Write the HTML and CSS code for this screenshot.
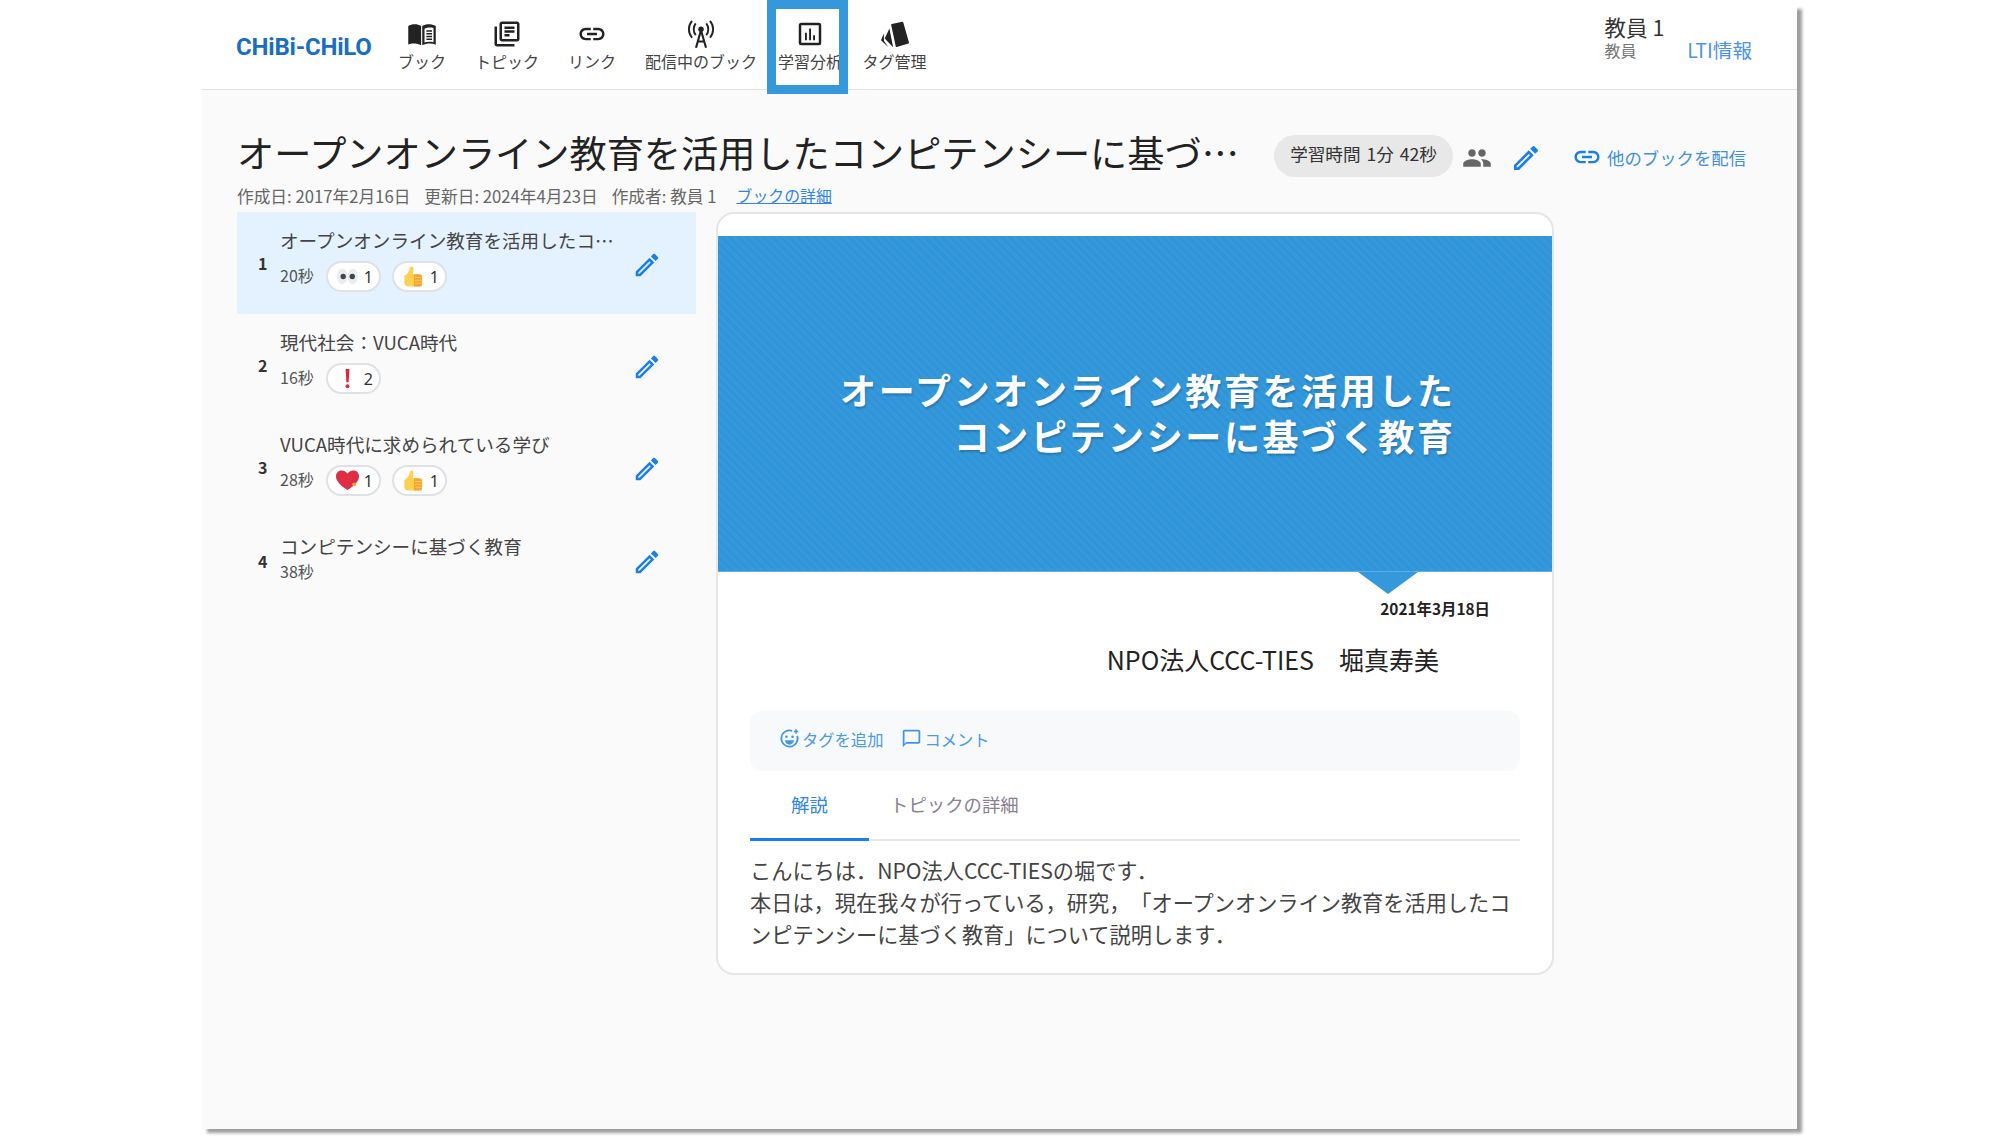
FILE: index.html
```html
<!DOCTYPE html>
<html lang="ja">
<head>
<meta charset="utf-8">
<title>CHiBi-CHiLO</title>
<link rel="stylesheet" href="styles.css">
</head>
<body>
<div class="page">
  <header class="header">
    <div class="logo">CHiBi-CHiLO</div>
    <nav class="nav">
      <a class="nav-item">
        <svg class="nav-icon" viewBox="0 0 24 24"><path d="M1 5.500C3.500 4 8 3.500 11.300 5.500V21C8 19.300 3.500 19.300 1 20.500Z" fill="#222"/><path d="M12.200 5.500C15.500 3.500 20 4 23 5.500V20.500C20 19.300 15.500 19.300 12.200 21Z" fill="#222"/><path d="M14 7.800C16 6.700 18.800 6.600 21.200 7.200V18.500C18.800 18 16 18 14 18.800Z" fill="#fff"/><path d="M15.500 9.600H20M15.500 11.800H20M15.500 14H20M15.500 16.200H20" stroke="#222" stroke-width="1.200"/></svg>
        <span>ブック</span>
      </a>
      <a class="nav-item">
        <svg class="nav-icon" viewBox="0 0 24 24"><path d="M4 6H2v14c0 1.100.9 2 2 2h14v-2H4V6zm16-4H8c-1.100 0-2 .9-2 2v12c0 1.100.9 2 2 2h12c1.100 0 2-.9 2-2V4c0-1.100-.9-2-2-2zm0 14H8V4h12v12zM10 9h8v2h-8zm0 3h4v2h-4zm0-6h8v2h-8z" fill="#222"/></svg>
        <span>トピック</span>
      </a>
      <a class="nav-item">
        <svg class="nav-icon" viewBox="0 0 24 24"><path d="M3.900 12c0-1.710 1.390-3.100 3.100-3.100h4V7H7c-2.760 0-5 2.240-5 5s2.240 5 5 5h4v-1.900H7c-1.710 0-3.100-1.390-3.100-3.100zM8 13h8v-2H8v2zm9-6h-4v1.900h4c1.710 0 3.100 1.390 3.100 3.100s-1.390 3.100-3.100 3.100h-4V17h4c2.760 0 5-2.240 5-5s-2.240-5-5-5z" fill="#222"/></svg>
        <span>リンク</span>
      </a>
      <a class="nav-item">
        <svg class="nav-icon" viewBox="0 0 24 24"><circle cx="12" cy="8.200" r="2.200" fill="#222"/><path d="M12 9L8 23M12 9L16 23M9.500 18H14.500" fill="none" stroke="#222" stroke-width="1.700"/><path d="M7.800 3.500C5.600 6.200 5.600 10.200 7.800 12.900M16.200 3.500C18.400 6.200 18.400 10.200 16.200 12.900M4.800 1.500C1.500 5.500 1.500 11 4.800 15M19.200 1.500C22.500 5.500 22.500 11 19.200 15" fill="none" stroke="#222" stroke-width="1.500"/></svg>
        <span>配信中のブック</span>
      </a>
      <a class="nav-item nav-current">
        <svg class="nav-icon" viewBox="0 0 24 24"><path d="M5 3h14a2 2 0 0 1 2 2v14a2 2 0 0 1-2 2H5a2 2 0 0 1-2-2V5a2 2 0 0 1 2-2zm0 2v14h14V5z" fill="#222" fill-rule="evenodd"/><path d="M8 11h1.500v6H8zM11.300 7.500h1.500V17h-1.500zM14.500 13H16v4h-1.500z" fill="#222"/></svg>
        <span>学習分析</span>
      </a>
      <a class="nav-item">
        <svg class="nav-icon" viewBox="0 0 24 24"><path d="M9.500 4.500L18 2.800L22.600 19L13.200 21.800Z" fill="#222" stroke="#222" stroke-width="1.200" stroke-linejoin="round"/><path d="M7.500 7.500L3.800 15.500L10.500 22.500Z" fill="#222"/><path d="M3 11.500L.8 17L6.800 22.500L3.200 17.500Z" fill="#222"/></svg>
        <span>タグ管理</span>
      </a>
    </nav>
    <div class="user">
      <div class="user-main">
        <div class="user-name">教員 1</div>
        <div class="user-role">教員</div>
      </div>
      <a class="user-lti">LTI情報</a>
    </div>
    <div class="highlight"></div>
  </header>

  <main class="main">
    <div class="title-row">
      <h1 class="title">オープンオンライン教育を活用したコンピテンシーに基づく教育</h1>
      <div class="chip-time">学習時間 1分 42秒</div>
      <svg class="icon-people" viewBox="0 0 24 24"><path d="M16 11c1.660 0 2.990-1.340 2.990-3S17.660 5 16 5c-1.660 0-3 1.340-3 3s1.340 3 3 3zm-8 0c1.660 0 2.990-1.340 2.990-3S9.660 5 8 5C6.340 5 5 6.340 5 8s1.340 3 3 3zm0 2c-2.330 0-7 1.170-7 3.500V19h14v-2.500c0-2.330-4.670-3.500-7-3.500zm8 0c-.29 0-.62.02-.97.05 1.160.84 1.970 1.970 1.970 3.450V19h6v-2.500c0-2.330-4.670-3.500-7-3.500z" fill="#666"/></svg>
      <svg class="icon-edit-lg" viewBox="0 0 24 24"><use href="#pencil"/></svg>
      <a class="share-link">
        <svg class="icon-link" viewBox="0 0 24 24"><path d="M3.900 12c0-1.710 1.390-3.100 3.100-3.100h4V7H7c-2.760 0-5 2.240-5 5s2.240 5 5 5h4v-1.900H7c-1.710 0-3.100-1.390-3.100-3.100zM8 13h8v-2H8v2zm9-6h-4v1.900h4c1.710 0 3.100 1.390 3.100 3.100s-1.390 3.100-3.100 3.100h-4V17h4c2.760 0 5-2.240 5-5s-2.240-5-5-5z" fill="#1a7fe8"/></svg>
        <span>他のブックを配信</span>
      </a>
    </div>
    <div class="meta">
      <span>作成日: 2017年2月16日</span>
      <span>更新日: 2024年4月23日</span>
      <span>作成者: 教員 1</span>
      <a class="meta-link">ブックの詳細</a>
    </div>

    <div class="content">
      <ol class="topics">
        <li class="topic topic-active">
          <span class="topic-num">1</span>
          <div class="topic-body">
            <div class="topic-title">オープンオンライン教育を活用したコンピテンシーに基づく教育</div>
            <div class="topic-info">
              <span class="topic-time">20秒</span>
              <span class="pill"><svg class="emoji" viewBox="0 0 24 24"><use href="#eyes"/></svg><b>1</b></span>
              <span class="pill"><svg class="emoji" viewBox="0 0 24 24"><use href="#thumb"/></svg><b>1</b></span>
            </div>
          </div>
          <svg class="icon-edit" viewBox="0 0 24 24"><use href="#pencil"/></svg>
        </li>
        <li class="topic">
          <span class="topic-num">2</span>
          <div class="topic-body">
            <div class="topic-title">現代社会：VUCA時代</div>
            <div class="topic-info">
              <span class="topic-time">16秒</span>
              <span class="pill"><svg class="emoji" viewBox="0 0 24 24"><use href="#exclaim"/></svg><b>2</b></span>
            </div>
          </div>
          <svg class="icon-edit" viewBox="0 0 24 24"><use href="#pencil"/></svg>
        </li>
        <li class="topic">
          <span class="topic-num">3</span>
          <div class="topic-body">
            <div class="topic-title">VUCA時代に求められている学び</div>
            <div class="topic-info">
              <span class="topic-time">28秒</span>
              <span class="pill"><svg class="emoji" viewBox="0 0 24 24"><use href="#heart"/></svg><b>1</b></span>
              <span class="pill"><svg class="emoji" viewBox="0 0 24 24"><use href="#thumb"/></svg><b>1</b></span>
            </div>
          </div>
          <svg class="icon-edit" viewBox="0 0 24 24"><use href="#pencil"/></svg>
        </li>
        <li class="topic topic-plain">
          <span class="topic-num">4</span>
          <div class="topic-body">
            <div class="topic-title">コンピテンシーに基づく教育</div>
            <div class="topic-info">
              <span class="topic-time">38秒</span>
            </div>
          </div>
          <svg class="icon-edit" viewBox="0 0 24 24"><use href="#pencil"/></svg>
        </li>
      </ol>

      <section class="card">
        <div class="slide">
          <div class="slide-blue">
            <div class="slide-title">オープンオンライン教育を活用した<br>コンピテンシーに基づく教育</div>
          </div>
          <div class="slide-arrow"></div>
          <div class="slide-date">2021年3月18日</div>
          <div class="slide-author">NPO法人CCC-TIES　堀真寿美</div>
        </div>
        <div class="card-body">
          <div class="toolbar">
            <a class="tool">
              <svg class="tool-icon" viewBox="0 0 24 24"><path d="M15 3.200A9.300 9.300 0 1 0 20.800 9" fill="none" stroke="#3f97ea" stroke-width="2"/><circle cx="8.500" cy="10" r="1.500" fill="#3f97ea"/><circle cx="15.500" cy="10" r="1.500" fill="#3f97ea"/><path d="M7 14h10a5 5 0 0 1-10 0z" fill="#3f97ea"/><path d="M19.500 1.500v5M17 4h5" stroke="#3f97ea" stroke-width="1.800"/></svg>
              <span>タグを追加</span>
            </a>
            <a class="tool">
              <svg class="tool-icon" viewBox="0 0 24 24"><path d="M20 2H4c-1.100 0-2 .9-2 2v18l4-4h14c1.100 0 2-.9 2-2V4c0-1.100-.9-2-2-2zm0 14H6l-2 2V4h16v12z" fill="#3f97ea"/></svg>
              <span>コメント</span>
            </a>
          </div>
          <div class="tabs">
            <a class="tab tab-active">解説</a>
            <a class="tab">トピックの詳細</a>
          </div>
          <p class="desc">こんにちは．NPO法人CCC-TIESの堀です．<br>本日は，現在我々が行っている，研究，「オープンオンライン教育を活用したコンピテンシーに基づく教育」について説明します．</p>
        </div>
      </section>
    </div>
  </main>
</div>

<svg class="defs" width="0" height="0" aria-hidden="true">
  <defs>
    <g id="pencil"><path d="M14.060 9.020l.92.92L5.920 19H5v-.92l9.060-9.060M17.660 3c-.25 0-.51.100-.7.290l-1.830 1.830 3.750 3.750 1.830-1.830c.39-.39.39-1.020 0-1.410l-2.340-2.340c-.2-.2-.45-.29-.71-.29zm-3.600 3.190L3 17.250V21h3.750L17.810 9.940l-3.750-3.750z" fill="#1a7fe8"/></g>
    <g id="eyes"><ellipse cx="6.500" cy="12" rx="5.500" ry="8" fill="#e9edf1"/><ellipse cx="17.500" cy="12" rx="5.500" ry="8" fill="#e9edf1"/><circle cx="7.500" cy="12" r="2.800" fill="#444"/><circle cx="17" cy="12" r="2.800" fill="#444"/></g>
    <g id="thumb"><path d="M2.500 11.500C5 10 7.500 7 8.500 2.500c.3-1.500 3.500-1 3.500 1.500 0 2-.5 4-1 5.500h7v13H7c-3 0-4.500-1.500-4.500-4z" fill="#fdd04f"/><path d="M12.500 10h7.500c1.500 0 1.500 12.500 0 12.500h-7.500z" fill="#f4a43a"/><path d="M13.500 13h7M13.500 16h7M13.500 19h7" stroke="#fdd04f" stroke-width="1"/></g>
    <g id="exclaim"><path d="M10 2h4l-.8 14h-2.400z" fill="#d8283c"/><circle cx="12" cy="20" r="2" fill="#d8283c"/></g>
    <g id="heart"><path d="M12 22C4 16.500 0 12.500 0 7.500 0 3.500 3 1.500 6 1.500c2.800 0 4.800 1.500 6 3.500 1.200-2 3.200-3.500 6-3.500 3 0 6 2 6 6 0 5-4 9-12 14.500z" fill="#dd2e44"/><circle cx="19" cy="16" r="2" fill="#f4a43a"/></g>
  </defs>
</svg>
</body>
</html>
```

FILE: styles.css
```css
* { box-sizing: border-box; }
html, body { margin: 0; height: 100%; overflow: hidden; background: #fff; }
body {
  font-family: "Noto Sans CJK JP", "Noto Sans", sans-serif;
  color: #333;
  padding: 5px 0 0 202px;
  text-spacing-trim: space-all;
}
a { color: inherit; text-decoration: none; }

.page {
  width: 1595px;
  height: 1124px;
  background: #fafafa;
  box-shadow: 5px 4px 3px rgba(0, 0, 0, .38);
  display: flex;
  flex-direction: column;
}

.header {
  position: relative;
  flex: none;
  height: 85px;
  background: #fff;
  border-bottom: 1px solid #e2e2e2;
  display: flex;
  align-items: flex-start;
  padding-left: 34px;
}
.logo {
  margin-top: 26px;
  width: 142px;
  font-family: Roboto, sans-serif;
  font-weight: 700;
  font-size: 24px;
  line-height: 32px;
  letter-spacing: -.2px;
  color: #1a6ec2;
  white-space: nowrap;
}
.nav { display: flex; gap: 29px; margin-left: 20px; margin-top: 14px; }
.nav-item { display: flex; flex-direction: column; align-items: center; font-size: 16px; line-height: 20px; color: #444; }
.nav-item span { white-space: nowrap; }
.nav-icon { width: 30px; height: 30px; margin-bottom: 2px; }
.nav-current { margin-left: -8px; margin-right: -8.500px; }
.highlight {
  position: absolute;
  left: 565px;
  top: -5px;
  width: 81px;
  height: 94px;
  border: 9px solid #3498db;
}
.user { margin-left: auto; margin-right: 45px; margin-top: 10px; display: flex; align-items: flex-end; gap: 23px; }
.user-name { font-size: 21.500px; line-height: 24px; color: #333; white-space: nowrap; }
.user-role { font-size: 16px; line-height: 22px; color: #777; }
.user-lti { font-size: 19.600px; line-height: 22px; color: #4b93e8; white-space: nowrap; }

.main { flex: 1; padding: 41px 35px 0; min-height: 0; }

.title-row { display: flex; align-items: center; height: 50px; }
.title {
  margin: 0 0 8px;
  width: 1005px;
  font-size: 37.200px;
  font-weight: 400;
  line-height: 50px;
  color: #222;
  white-space: nowrap;
  overflow: hidden;
  text-overflow: ellipsis;
}
.chip-time {
  margin-left: 32px;
  width: 179px;
  height: 42px;
  border-radius: 21px;
  background: #e8e8e8;
  font-size: 17.600px;
  line-height: 38px;
  word-spacing: 2px;
  text-align: center;
  color: #333;
  white-space: nowrap;
}
.icon-people { width: 30px; height: 30px; margin-left: 9px; margin-top: 3px; }
.icon-edit-lg { width: 32px; height: 32px; margin-left: 18px; margin-top: 3px; }
.share-link { display: flex; align-items: center; gap: 5px; margin-left: 30px; margin-top: 2px; font-size: 17.400px; color: #3f8fe6; white-space: nowrap; }
.icon-link { width: 30px; height: 30px; }

.meta { display: flex; gap: 14px; height: 26px; margin-top: 2px; font-size: 16.700px; line-height: 26px; color: #666; white-space: nowrap; }
.meta-link { margin-left: 6px; color: #2f85ea; text-decoration: underline; font-size: 15.900px; }

.content { display: flex; align-items: flex-start; gap: 20px; margin-top: 3px; }

.topics { list-style: none; margin: 0; padding: 0; width: 459px; flex: none; }
.topic { display: flex; align-items: center; height: 102px; padding: 0 0 0 21px; }
.topic-active { background: #e4f2ff; }
.topic-plain { height: 85px; }
.topic-num { width: 22px; flex: none; font-size: 16px; font-weight: 700; color: #333; text-align: left; }
.topic-body { width: 339px; flex: none; margin-bottom: 8px; }
.topic-title { font-size: 18.600px; line-height: 27px; color: #444; white-space: nowrap; overflow: hidden; text-overflow: ellipsis; }
.topic-info { display: flex; align-items: center; gap: 10px; margin-top: 8px; font-size: 16px; color: #555; }
.topic-plain .topic-body { margin-bottom: 3px; }
.topic-plain .topic-info { margin-top: 0; }
.topic-time { width: 36px; line-height: 24px; margin-bottom: 3px; }
.pill {
  display: inline-flex;
  align-items: center;
  justify-content: space-between;
  width: 55px;
  height: 31px;
  padding: 0 6px 0 8px;
  border: 2px solid #dfe1e4;
  border-radius: 16px;
  background: #fff;
  margin-right: 1px;
}
.pill b { font-weight: 400; font-size: 16px; color: #333; font-family: "Noto Sans", sans-serif; }
.emoji { width: 23px; height: 23px; }
.icon-edit { width: 30px; height: 30px; margin-left: 13px; margin-top: 3px; }

.card {
  flex: none;
  width: 838px;
  height: 763px;
  background: #fff;
  border: 2px solid #e6e6e6;
  border-radius: 18px;
  overflow: hidden;
  padding-top: 22px;
}
.slide { position: relative; height: 475px; }
.slide-blue {
  height: 336px;
  padding: 129.500px 100px 0 0;
  background: repeating-linear-gradient(45deg, #3498db 0 3px, #3094d8 3px 6px);
  border-bottom: 1px solid #5cb0e8;
}
.slide-title {
  text-align: right;
  font-size: 36px;
  font-weight: 700;
  line-height: 46px;
  letter-spacing: 2.600px;
  margin-right: -3.500px;
  color: #fff;
  text-shadow: 1px 2px 2px rgba(0, 0, 0, .2);
}
.slide-arrow {
  position: absolute;
  left: 640px;
  top: 336px;
  width: 0;
  height: 0;
  border-left: 30px solid transparent;
  border-right: 30px solid transparent;
  border-top: 22px solid #3498db;
}
.slide-date { position: absolute; right: 62px; top: 359.500px; font-size: 15.400px; line-height: 24px; font-weight: 700; color: #222; }
.slide-author { position: absolute; right: 113px; top: 406px; font-size: 25px; line-height: 34px; color: #222; white-space: nowrap; }

.card-body { padding: 0 32px; }
.toolbar { display: flex; gap: 18px; height: 60px; padding-left: 29px; align-items: center; background: #f8f9fb; border-radius: 12px; }
.tool { display: flex; align-items: center; gap: 2px; margin-bottom: 5px; font-size: 16.300px; color: #4a9be8; }
.tool-icon { width: 21px; height: 21px; }
.tabs { display: flex; height: 70px; border-bottom: 2px solid #e8e8e8; }
.tab { display: flex; align-items: center; justify-content: center; height: 70px; padding: 0 21px; border-bottom: 5px solid transparent; font-size: 18.400px; color: #8a8090; white-space: nowrap; }
.tab-active { width: 119px; color: #2f85ea; border-bottom: 3px solid #1a7fe8; padding: 0 0 2px; }
.desc { margin: 13px 0 0; font-size: 21.200px; line-height: 32px; color: #444; }
.defs { position: absolute; }
```
